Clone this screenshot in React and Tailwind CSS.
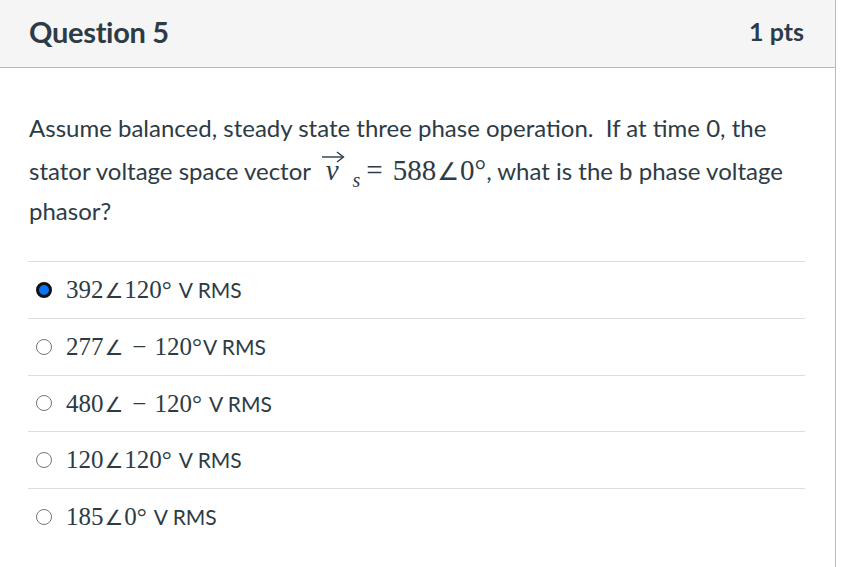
import React from "react";

function Radio({ checked }) {
  if (checked) {
    return (
      <span className="inline-flex w-[16px] h-[16px] rounded-full border-[3px] border-[#111] bg-[#0a74f5] shrink-0" />
    );
  }
  return (
    <span className="inline-flex w-[16px] h-[16px] rounded-full border-[1.5px] border-[#767676] bg-white shrink-0" />
  );
}

function Angle() {
  return <span className="font-['DejaVu_Sans',sans-serif] text-[0.84em] mx-[1px]">∠</span>;
}

// math part is a serif run, the unit is plain text
function Answer({ mag, neg, ang, tight, checked }) {
  return (
    <div className="flex items-center h-[56.75px] border-t border-[#dcdcdc] pl-[8px]">
      <Radio checked={checked} />
      <span className="ml-[14px] flex items-baseline text-[#2d3b45]">
        <span className="text-[25px] font-['Liberation_Serif','DejaVu_Serif',serif]">
          {mag}
          <Angle />
          {neg && <span className="mx-[8px]">−</span>}
          {ang}°
        </span>
        <span className={tight ? "ml-[1px] text-[21px]" : "ml-[7px] text-[21px]"}>V RMS</span>
      </span>
    </div>
  );
}

export default function App() {
  return (
    <div className="w-[836px] min-h-[567px] border-r border-[#b9b9b9] bg-white text-[#2d3b45] font-['Lato','Open_Sans',sans-serif]">
      <div className="h-[68px] bg-[#f5f5f5] border-b border-[#b9b9b9] flex items-center justify-between pl-[29px] pr-[31px] pb-[4px]">
        <h2 className="text-[29px] font-bold tracking-[-0.3px]">Question 5</h2>
        <span className="text-[25px] font-bold">1 pts</span>
      </div>

      <div className="px-[29px] pt-[40px]">
        <div className="text-[24px] leading-[40px]">
          <p>Assume balanced, steady state three phase operation.&nbsp; If at time 0, the</p>
          <p className="pt-[3px]">
            stator voltage space vector{" "}
            <span className="inline-flex items-baseline leading-none font-['Liberation_Serif','DejaVu_Serif',serif] text-[29px]">
              <span className="relative inline-block italic pl-[9px] pr-[2px]">
                v
                <svg
                  className="absolute left-[4px] top-[-5px]"
                  width="24"
                  height="12"
                  viewBox="0 0 24 12"
                >
                  <path d="M1 6 H22" stroke="#2d3b45" strokeWidth="1.4" fill="none" />
                  <path d="M16 1 L22.5 6 L16 11" stroke="#2d3b45" strokeWidth="1.4" fill="none" />
                </svg>
              </span>
              <span className="text-[20px] italic relative top-[7px] ml-[12px]">s</span>
              <span className="ml-[6px]">=</span>
              <span className="ml-[10px]">
                588
                <Angle />
                0°
              </span>
            </span>
            , what is the b phase voltage
          </p>
          <p>phasor?</p>
        </div>
      </div>

      <div className="mx-[28px] mt-[30px] w-[777px]">
        <Answer mag="392" ang="120" checked />
        <Answer mag="277" neg ang="120" tight />
        <Answer mag="480" neg ang="120" />
        <Answer mag="120" ang="120" />
        <Answer mag="185" ang="0" />
      </div>
    </div>
  );
}
